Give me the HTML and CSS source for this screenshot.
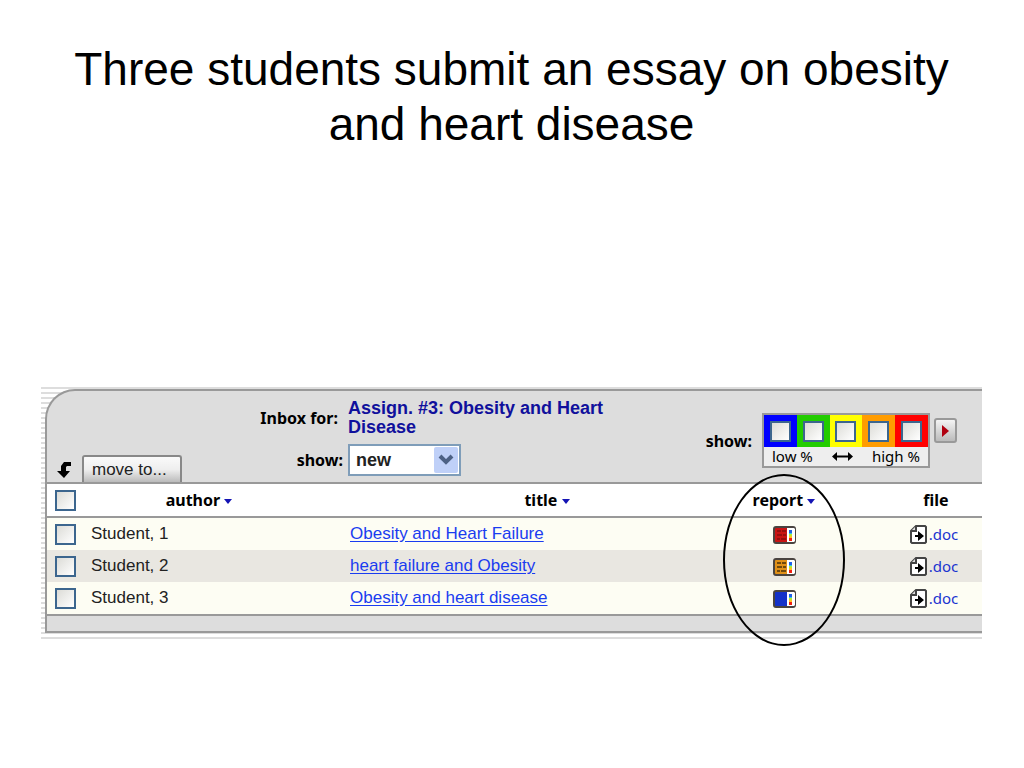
FILE: index.html
```html
<!DOCTYPE html>
<html lang="en">
<head>
  <meta charset="UTF-8">
  <meta name="viewport" content="width=device-width, initial-scale=1.0">
  <title>Three students submit an essay</title>
  <link rel="stylesheet" href="styles.css">
</head>
<body>
  <!-- shared icons -->
  <svg class="sprite" aria-hidden="true">
    <symbol id="icon-report" viewBox="0 0 23 18">
      <rect x="1" y="1" width="21" height="16" rx="2" fill="currentColor" stroke="#4a4440" stroke-width="2"/>
      <path d="M14 2h7l1 1v12l-1 1h-7z" fill="#fff"/>
      <path d="M16 4h3v3h-3z" fill="#2060e8"/>
      <path d="M16 7h3v1h-3z" fill="#30c8e0"/>
      <path d="M16 8h3v2h-3z" fill="#b8e830"/>
      <path d="M16 10h3v2h-3z" fill="#ffc020"/>
      <path d="M16 12h3v3h-3z" fill="#f02010"/>
    </symbol>
    <symbol id="icon-file" viewBox="0 0 17 19">
      <path d="M6 1h9l1 1v15l-1 1H2l-1-1V6z" fill="#fff" stroke="#444" stroke-width="2"/>
      <path d="M6 1v5H1" fill="#ddd" stroke="#444" stroke-width="2"/>
      <path d="M5 10h3V6l6 5-6 5v-4H5z" fill="#000"/>
    </symbol>
  </svg>

  <main class="slide">
    <h1>Three students submit an essay on obesity and heart disease</h1>

    <section class="inbox">
      <div class="panel">
        <div class="toolbar">
          <div class="actions">
            <svg class="down-arrow" width="16" height="16" viewBox="0 0 16 16"><path d="M15 0v4h-4l-1 1v4h4l-6 7-7-7h4V4l3-4z"/></svg>
            <button type="button" class="move">move to...</button>
          </div>

          <div class="assignment">
            <span class="label inbox-for">Inbox for:</span>
            <strong class="name">Assign. #3: Obesity and Heart Disease</strong>
            <label class="label" for="show">show:</label>
            <div class="select">
              <select id="show"><option>new</option></select>
              <svg width="24" height="26" viewBox="0 0 24 26"><rect width="24" height="26" rx="2" fill="#bfd0f8"/><path d="M6 9l6 6 6-6" fill="none" stroke="#4d6185" stroke-width="4"/></svg>
            </div>
          </div>

          <div class="similarity">
            <span class="label">show:</span>
            <div class="scale">
              <div class="swatches">
                <span class="swatch blue"><input type="checkbox" aria-label="blue"></span>
                <span class="swatch green"><input type="checkbox" aria-label="green"></span>
                <span class="swatch yellow"><input type="checkbox" aria-label="yellow"></span>
                <span class="swatch orange"><input type="checkbox" aria-label="orange"></span>
                <span class="swatch red"><input type="checkbox" aria-label="red"></span>
              </div>
              <div class="legend">
                <span>low %</span>
                <svg width="21" height="9" viewBox="0 0 21 9"><path d="M0 4.500l5-4.500v3.500h11V0l5 4.500L16 9V5.500H5V9z"/></svg>
                <span>high %</span>
              </div>
            </div>
            <button type="button" class="go" aria-label="Go"><svg width="7" height="12" viewBox="0 0 7 12"><path d="M0 0l7 6-7 6z" fill="#b00010"/></svg></button>
          </div>
        </div>

        <table>
          <thead>
            <tr>
              <th class="check"><input type="checkbox" aria-label="Select all"></th>
              <th class="author">author <svg class="sort" width="8" height="5" viewBox="0 0 8 5"><path d="M0 0h8L4 5z"/></svg></th>
              <th class="title">title <svg class="sort" width="8" height="5" viewBox="0 0 8 5"><path d="M0 0h8L4 5z"/></svg></th>
              <th class="report">report <svg class="sort" width="8" height="5" viewBox="0 0 8 5"><path d="M0 0h8L4 5z"/></svg><span class="circle"></span></th>
              <th class="file">file</th>
            </tr>
          </thead>
          <tbody>
            <tr>
              <td class="check"><input type="checkbox" aria-label="Student, 1"></td>
              <td class="author">Student, 1</td>
              <td class="title"><a href="#">Obesity and Heart Failure</a></td>
              <td class="report high"><svg width="23" height="18"><use href="#icon-report"/><path class="lines" d="M4 5h4M9 5h4M4 9h5M10 9h3M4 13h3M8 13h5"/></svg></td>
              <td class="file"><a href="#"><svg width="17" height="19"><use href="#icon-file"/></svg>.doc</a></td>
            </tr>
            <tr>
              <td class="check"><input type="checkbox" aria-label="Student, 2"></td>
              <td class="author">Student, 2</td>
              <td class="title"><a href="#">heart failure and Obesity</a></td>
              <td class="report medium"><svg width="23" height="18"><use href="#icon-report"/><path class="lines" d="M4 5h4M9 5h4M4 9h5M10 9h3M4 13h3M8 13h5"/></svg></td>
              <td class="file"><a href="#"><svg width="17" height="19"><use href="#icon-file"/></svg>.doc</a></td>
            </tr>
            <tr>
              <td class="check"><input type="checkbox" aria-label="Student, 3"></td>
              <td class="author">Student, 3</td>
              <td class="title"><a href="#">Obesity and heart disease</a></td>
              <td class="report low"><svg width="23" height="18"><use href="#icon-report"/></svg></td>
              <td class="file"><a href="#"><svg width="17" height="19"><use href="#icon-file"/></svg>.doc</a></td>
            </tr>
          </tbody>
        </table>
        <div class="panel-footer"></div>
      </div>
    </section>
  </main>
</body>
</html>
```
FILE: styles.css
```css
* {
  box-sizing: border-box;
}

body {
  margin: 0;
  background: #fff;
  color: #000;
  font-family: "Liberation Sans", Arial, sans-serif;
  font-size: 17px;
}

.sprite {
  position: absolute;
  width: 0;
  height: 0;
}

.slide {
  min-height: 100vh;
  padding: 42px 42px 0 41px;
}

h1 {
  margin: 0 0 235px;
  padding: 0 30px;
  font-size: 46px;
  font-weight: normal;
  line-height: 55px;
  text-align: center;
}

.inbox {
  padding: 2px 0 7px 4px;
  background: repeating-linear-gradient(#ddd 0 2px, #fff 2px 5px);
}

.panel {
  border: 2px solid #999;
  border-right: 0;
  border-radius: 30px 0 0 0;
  background: #ddd;
}

.toolbar {
  display: flex;
  height: 93px;
  border-bottom: 2px solid #999;
}

.label {
  font: bold 16px/20px "Noto Sans", sans-serif;
  text-align: right;
}

.actions {
  display: flex;
  align-items: flex-end;
  gap: 10px;
  width: 204px;
  padding-left: 9px;
}

.down-arrow {
  margin-bottom: 4px;
}

.move {
  width: 100px;
  height: 27px;
  padding: 0 0 0 8px;
  border: 2px solid #888;
  border-bottom: 0;
  border-radius: 3px 3px 0 0;
  background: linear-gradient(#fafafa, #eee 50%, #bbb);
  color: #222;
  font: 17px "Liberation Sans", Arial, sans-serif;
  text-align: left;
}

.assignment {
  display: grid;
  grid-template-columns: 92px 270px;
  grid-template-rows: 38px 32px;
  gap: 7px 5px;
  align-items: center;
  align-content: start;
  padding-top: 8px;
}

.inbox-for {
  padding-right: 5px;
}

.name {
  color: #10109c;
  font-size: 18px;
  line-height: 19px;
}

.select {
  position: relative;
  width: 113px;
}

.select select {
  display: block;
  width: 100%;
  height: 32px;
  padding: 0 6px;
  border: 2px solid #7f9db9;
  border-radius: 0;
  background: #fff;
  color: #222;
  font: bold 18px "Liberation Sans", Arial, sans-serif;
  appearance: none;
}

.select svg {
  position: absolute;
  top: 3px;
  right: 3px;
  pointer-events: none;
}

.similarity {
  display: flex;
  align-items: flex-start;
  margin-left: auto;
  padding: 22px 25px 0 0;
}

.similarity .label {
  margin: 18px 10px 0 0;
}

.scale {
  width: 168px;
  border: 2px solid #999;
  background: #eee;
}

.swatches {
  display: flex;
}

.swatch {
  display: flex;
  flex: 1;
  align-items: center;
  justify-content: center;
  height: 32px;
}

.blue { background: #00f; }
.green { background: #2c0; }
.yellow { background: #ff0; }
.orange { background: #ff9c00; }
.red { background: #f00; }

.legend {
  display: flex;
  align-items: center;
  justify-content: space-between;
  height: 19px;
  padding: 0 8px;
  font: 15px/19px "Noto Sans", sans-serif;
}

.go {
  display: flex;
  align-items: center;
  justify-content: center;
  width: 23px;
  height: 25px;
  margin: 5px 0 0 4px;
  padding: 0;
  border: 2px solid #999;
  border-radius: 3px;
  background: linear-gradient(#f4f4f4, #bbb);
}

input[type="checkbox"] {
  display: block;
  width: 21px;
  height: 21px;
  margin: 0;
  border: 2px solid #3c668e;
  background: linear-gradient(135deg, #dcdcd7, #fff);
  appearance: none;
}

table {
  width: 100%;
  border-spacing: 0;
  table-layout: fixed;
}

th,
td {
  height: 32px;
  padding: 0;
}

th {
  height: 34px;
  background: #fff;
  font: bold 16px/20px "Noto Sans", sans-serif;
  white-space: nowrap;
}

th,
tbody tr:last-child td {
  height: 34px;
  border-bottom: 2px solid #999;
}

td {
  background: #fdfdf3;
  color: #222;
}

tbody tr:nth-child(2) td {
  background: #e9e7e1;
}

.check {
  width: 36px;
  padding-left: 8px;
}

.author {
  width: 232px;
}

td.author {
  padding-left: 8px;
}

.title {
  padding: 0 8px 0 35px;
}

.title a {
  color: #1a3cf0;
  text-underline-offset: 2px;
}

.report {
  position: relative;
  width: 64px;
  text-align: center;
}

.file {
  width: 166px;
  padding-left: 74px;
  text-align: center;
}

td.file {
  padding-left: 70px;
}

.file a {
  display: flex;
  align-items: center;
  justify-content: center;
  gap: 2px;
  color: #1a34d0;
  font: 15px/20px "Noto Sans", sans-serif;
  text-decoration: none;
}

.report svg {
  vertical-align: middle;
}

.sort {
  fill: #1414b4;
  vertical-align: middle;
}

.high { color: #c81414; }
.medium { color: #e09018; }
.low { color: #1432c8; }

.lines {
  fill: none;
  stroke: #000;
  stroke-opacity: .5;
  stroke-width: 2;
}

.high .lines {
  stroke-opacity: .25;
}

/* ring over the report column */
.circle {
  position: absolute;
  top: -10px;
  left: 50%;
  z-index: 1;
  width: 122px;
  height: 172px;
  border: 2px solid #000;
  border-radius: 50%;
  transform: translateX(-50%);
  pointer-events: none;
}

.panel-footer {
  height: 15px;
}
```
